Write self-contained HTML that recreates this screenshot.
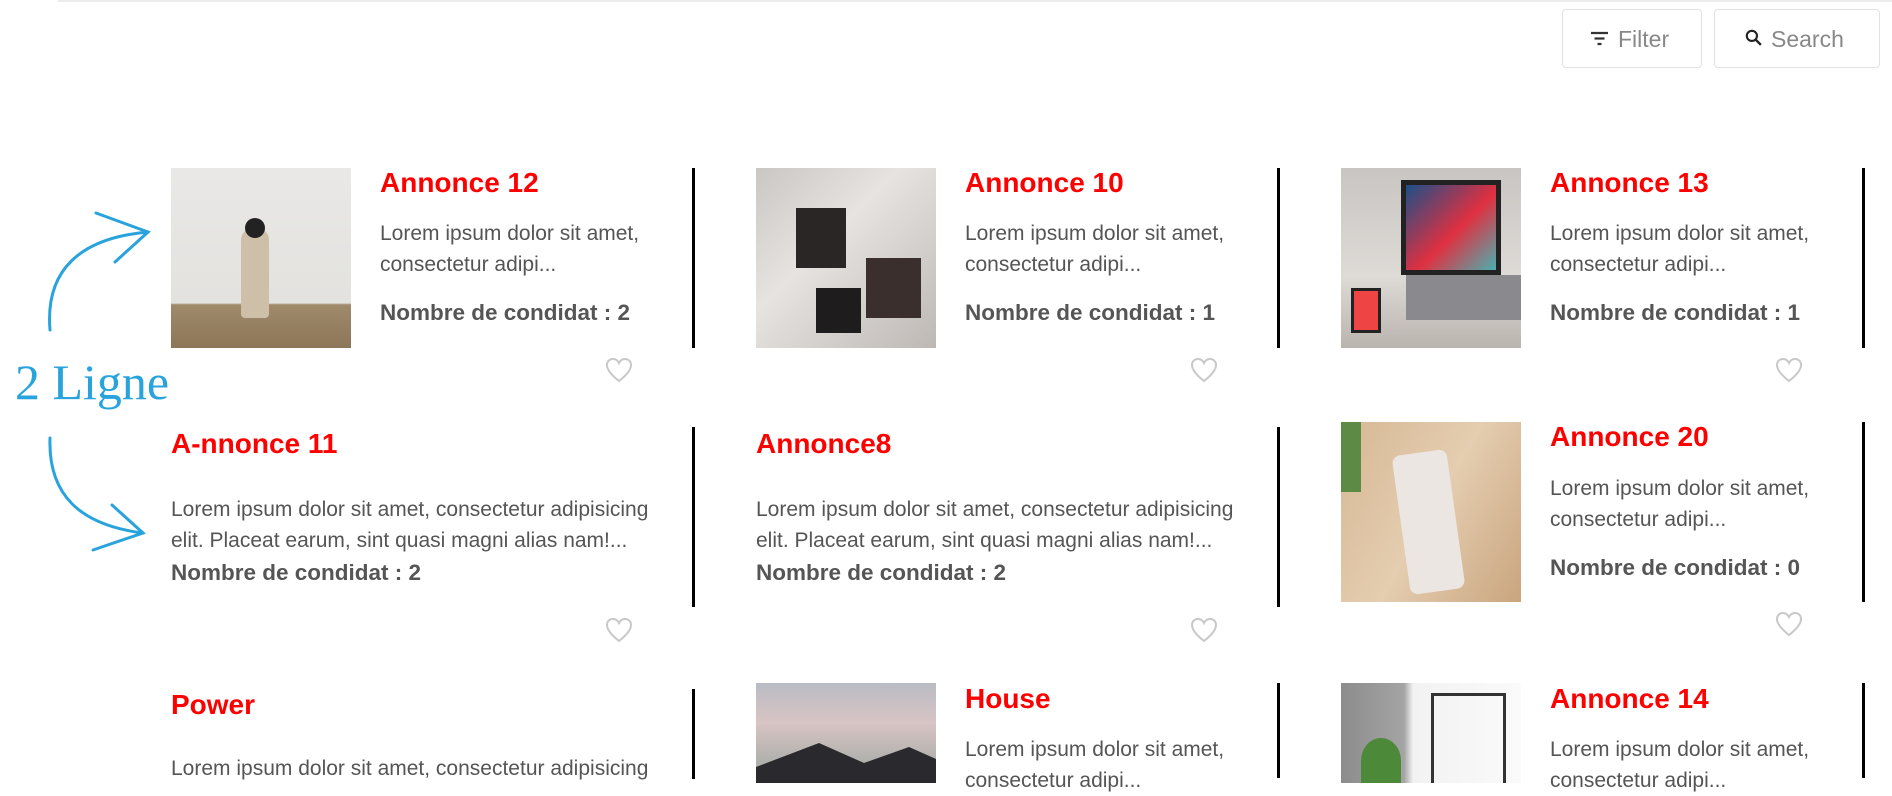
<!DOCTYPE html>
<html><head><meta charset="utf-8"><style>
*{margin:0;padding:0;box-sizing:border-box}
body{width:1892px;height:774px;overflow:hidden;background:#fff;position:relative;font-family:"Liberation Sans",Arial,sans-serif}
.a{position:absolute}
.t{position:absolute;color:#f00;font-weight:bold;font-size:28px;line-height:30px;white-space:nowrap}
.p{position:absolute;color:#555;font-size:21px;line-height:31px;white-space:nowrap}
.b{position:absolute;color:#555;font-weight:bold;font-size:22.5px;line-height:30px;white-space:nowrap}
.l{position:absolute;width:3px;background:#000}
.btn{position:absolute;border:1px solid #e2e2e2;border-radius:4px;color:#888;font-size:23px;line-height:58px}
.h{position:absolute;width:28px;height:26px}
</style></head><body>
<div class="a" style="left:58px;top:0;width:1834px;height:2px;background:#ececec"></div>

<div class="btn" style="left:1562px;top:9px;width:140px;height:59px">
<svg class="a" style="left:28px;top:21px" width="17" height="15" viewBox="0 0 17 15"><path d="M0 2h17M3.5 7.5h10M6.5 13h4" stroke="#333" stroke-width="2.2"/></svg>
<span class="a" style="left:55px;top:0">Filter</span></div>
<div class="btn" style="left:1714px;top:9px;width:166px;height:59px">
<svg class="a" style="left:30px;top:19px" width="18" height="18" viewBox="0 0 17 17"><circle cx="6.5" cy="6.5" r="4.8" fill="none" stroke="#222" stroke-width="2"/><path d="M10 10l5 5" stroke="#222" stroke-width="2.2"/></svg>
<span class="a" style="left:56px;top:0">Search</span></div>

<svg class="a" style="left:0;top:190px" width="170" height="380" viewBox="0 190 170 380">
<g fill="none" stroke="#29a3dc" stroke-width="3" stroke-linecap="round">
<path d="M50 330 C45 270 80 238 148 232"/><path d="M96 213 L148 232 L115 262"/>
<path d="M50 438 C48 495 80 525 143 533"/><path d="M112 505 L143 533 L93 550"/>
</g></svg>
<div class="a" style="left:15px;top:357px;font-family:'Liberation Serif',serif;font-size:50px;line-height:50px;color:#29a3dc;white-space:nowrap">2 Ligne</div>

<div class="a" style="left:171px;top:168px;width:180px;height:180px;background:linear-gradient(#e9e8e6 0,#e3e2df 75%,#a08a6c 76%,#8d7658 100%)"><div class="a" style="left:70px;top:60px;width:28px;height:90px;background:#cdbfa8;border-radius:12px 12px 4px 4px"></div><div class="a" style="left:74px;top:50px;width:20px;height:20px;background:#222;border-radius:50%"></div></div>
<div class="t" style="left:380px;top:168px">Annonce 12</div>
<div class="p" style="left:380px;top:218px">Lorem ipsum dolor sit amet,<br>consectetur adipi...</div>
<div class="b" style="left:380px;top:298px">Nombre de condidat : 2</div>
<div class="l" style="left:692px;top:168px;height:180px"></div>

<div class="a" style="left:756px;top:168px;width:180px;height:180px;background:linear-gradient(135deg,#c9c6c3,#e6e3e0 40%,#bdb8b4)"><div class="a" style="left:40px;top:40px;width:50px;height:60px;background:#2a2626"></div><div class="a" style="left:110px;top:90px;width:55px;height:60px;background:#3a2f2d"></div><div class="a" style="left:60px;top:120px;width:45px;height:45px;background:#1e1c1c"></div></div>
<div class="t" style="left:965px;top:168px">Annonce 10</div>
<div class="p" style="left:965px;top:218px">Lorem ipsum dolor sit amet,<br>consectetur adipi...</div>
<div class="b" style="left:965px;top:298px">Nombre de condidat : 1</div>
<div class="l" style="left:1277px;top:168px;height:180px"></div>

<div class="a" style="left:1341px;top:168px;width:180px;height:180px;background:linear-gradient(#c8c5c2,#dedad6 60%,#b9b4ae)"><div class="a" style="left:60px;top:12px;width:100px;height:95px;background:linear-gradient(135deg,#1c4f88,#e03040 55%,#4ab0b0);border:5px solid #222"></div><div class="a" style="left:65px;top:107px;width:115px;height:45px;background:#8a8a8e"></div><div class="a" style="left:10px;top:120px;width:30px;height:45px;background:#e44;border:3px solid #222"></div></div>
<div class="t" style="left:1550px;top:168px">Annonce 13</div>
<div class="p" style="left:1550px;top:218px">Lorem ipsum dolor sit amet,<br>consectetur adipi...</div>
<div class="b" style="left:1550px;top:298px">Nombre de condidat : 1</div>
<div class="l" style="left:1862px;top:168px;height:180px"></div>

<div class="t" style="left:171px;top:429px">A-nnonce 11</div>
<div class="p" style="left:171px;top:494px">Lorem ipsum dolor sit amet, consectetur adipisicing<br>elit. Placeat earum, sint quasi magni alias nam!...</div>
<div class="b" style="left:171px;top:558px">Nombre de condidat : 2</div>
<div class="l" style="left:692px;top:427px;height:180px"></div>

<div class="t" style="left:756px;top:429px">Annonce8</div>
<div class="p" style="left:756px;top:494px">Lorem ipsum dolor sit amet, consectetur adipisicing<br>elit. Placeat earum, sint quasi magni alias nam!...</div>
<div class="b" style="left:756px;top:558px">Nombre de condidat : 2</div>
<div class="l" style="left:1277px;top:427px;height:180px"></div>

<div class="a" style="left:1341px;top:422px;width:180px;height:180px;background:linear-gradient(120deg,#d6b894,#e4cdb0 50%,#caa57e)"><div class="a" style="left:0;top:0;width:20px;height:70px;background:#5d8b45"></div><div class="a" style="left:60px;top:30px;width:55px;height:140px;background:#ece6e2;border-radius:8px;transform:rotate(-8deg)"></div></div>
<div class="t" style="left:1550px;top:422px">Annonce 20</div>
<div class="p" style="left:1550px;top:473px">Lorem ipsum dolor sit amet,<br>consectetur adipi...</div>
<div class="b" style="left:1550px;top:553px">Nombre de condidat : 0</div>
<div class="l" style="left:1862px;top:422px;height:180px"></div>

<div class="t" style="left:171px;top:690px">Power</div>
<div class="p" style="left:171px;top:753px">Lorem ipsum dolor sit amet, consectetur adipisicing</div>
<div class="l" style="left:692px;top:689px;height:90px"></div>

<div class="a" style="left:756px;top:683px;width:180px;height:100px;background:linear-gradient(#b9bcc4,#d8c4c4 40%,#9aa6a0)"><div class="a" style="left:0;top:60px;width:180px;height:40px;background:#2a2a2e;clip-path:polygon(0 60%,35% 0,60% 50%,85% 10%,100% 40%,100% 100%,0 100%)"></div></div>
<div class="t" style="left:965px;top:684px">House</div>
<div class="p" style="left:965px;top:734px">Lorem ipsum dolor sit amet,<br>consectetur adipi...</div>
<div class="l" style="left:1277px;top:683px;height:95px"></div>

<div class="a" style="left:1341px;top:683px;width:180px;height:100px;background:linear-gradient(90deg,#8c8c8c,#a4a4a4 35%,#f2f2f2 40%,#fafafa)"><div class="a" style="left:90px;top:10px;width:75px;height:90px;border:3px solid #333;border-bottom:0"></div><div class="a" style="left:20px;top:55px;width:40px;height:45px;background:#4c8a3a;border-radius:50% 50% 0 0"></div></div>
<div class="t" style="left:1550px;top:684px">Annonce 14</div>
<div class="p" style="left:1550px;top:734px">Lorem ipsum dolor sit amet,<br>consectetur adipi...</div>
<div class="l" style="left:1862px;top:683px;height:95px"></div>

<svg width="0" height="0" style="position:absolute"><defs><path id="hr" d="M14 24 C5 17 2 12 2 8 C2 4 5 2 8 2 C11 2 13 4 14 6 C15 4 17 2 20 2 C23 2 26 4 26 8 C26 12 23 17 14 24Z" fill="none" stroke="#c8c8c8" stroke-width="2"/></defs></svg>
<svg class="h" style="left:605px;top:357px"><use href="#hr"/></svg>
<svg class="h" style="left:1190px;top:357px"><use href="#hr"/></svg>
<svg class="h" style="left:1775px;top:357px"><use href="#hr"/></svg>
<svg class="h" style="left:605px;top:617px"><use href="#hr"/></svg>
<svg class="h" style="left:1190px;top:617px"><use href="#hr"/></svg>
<svg class="h" style="left:1775px;top:611px"><use href="#hr"/></svg>
</body></html>
